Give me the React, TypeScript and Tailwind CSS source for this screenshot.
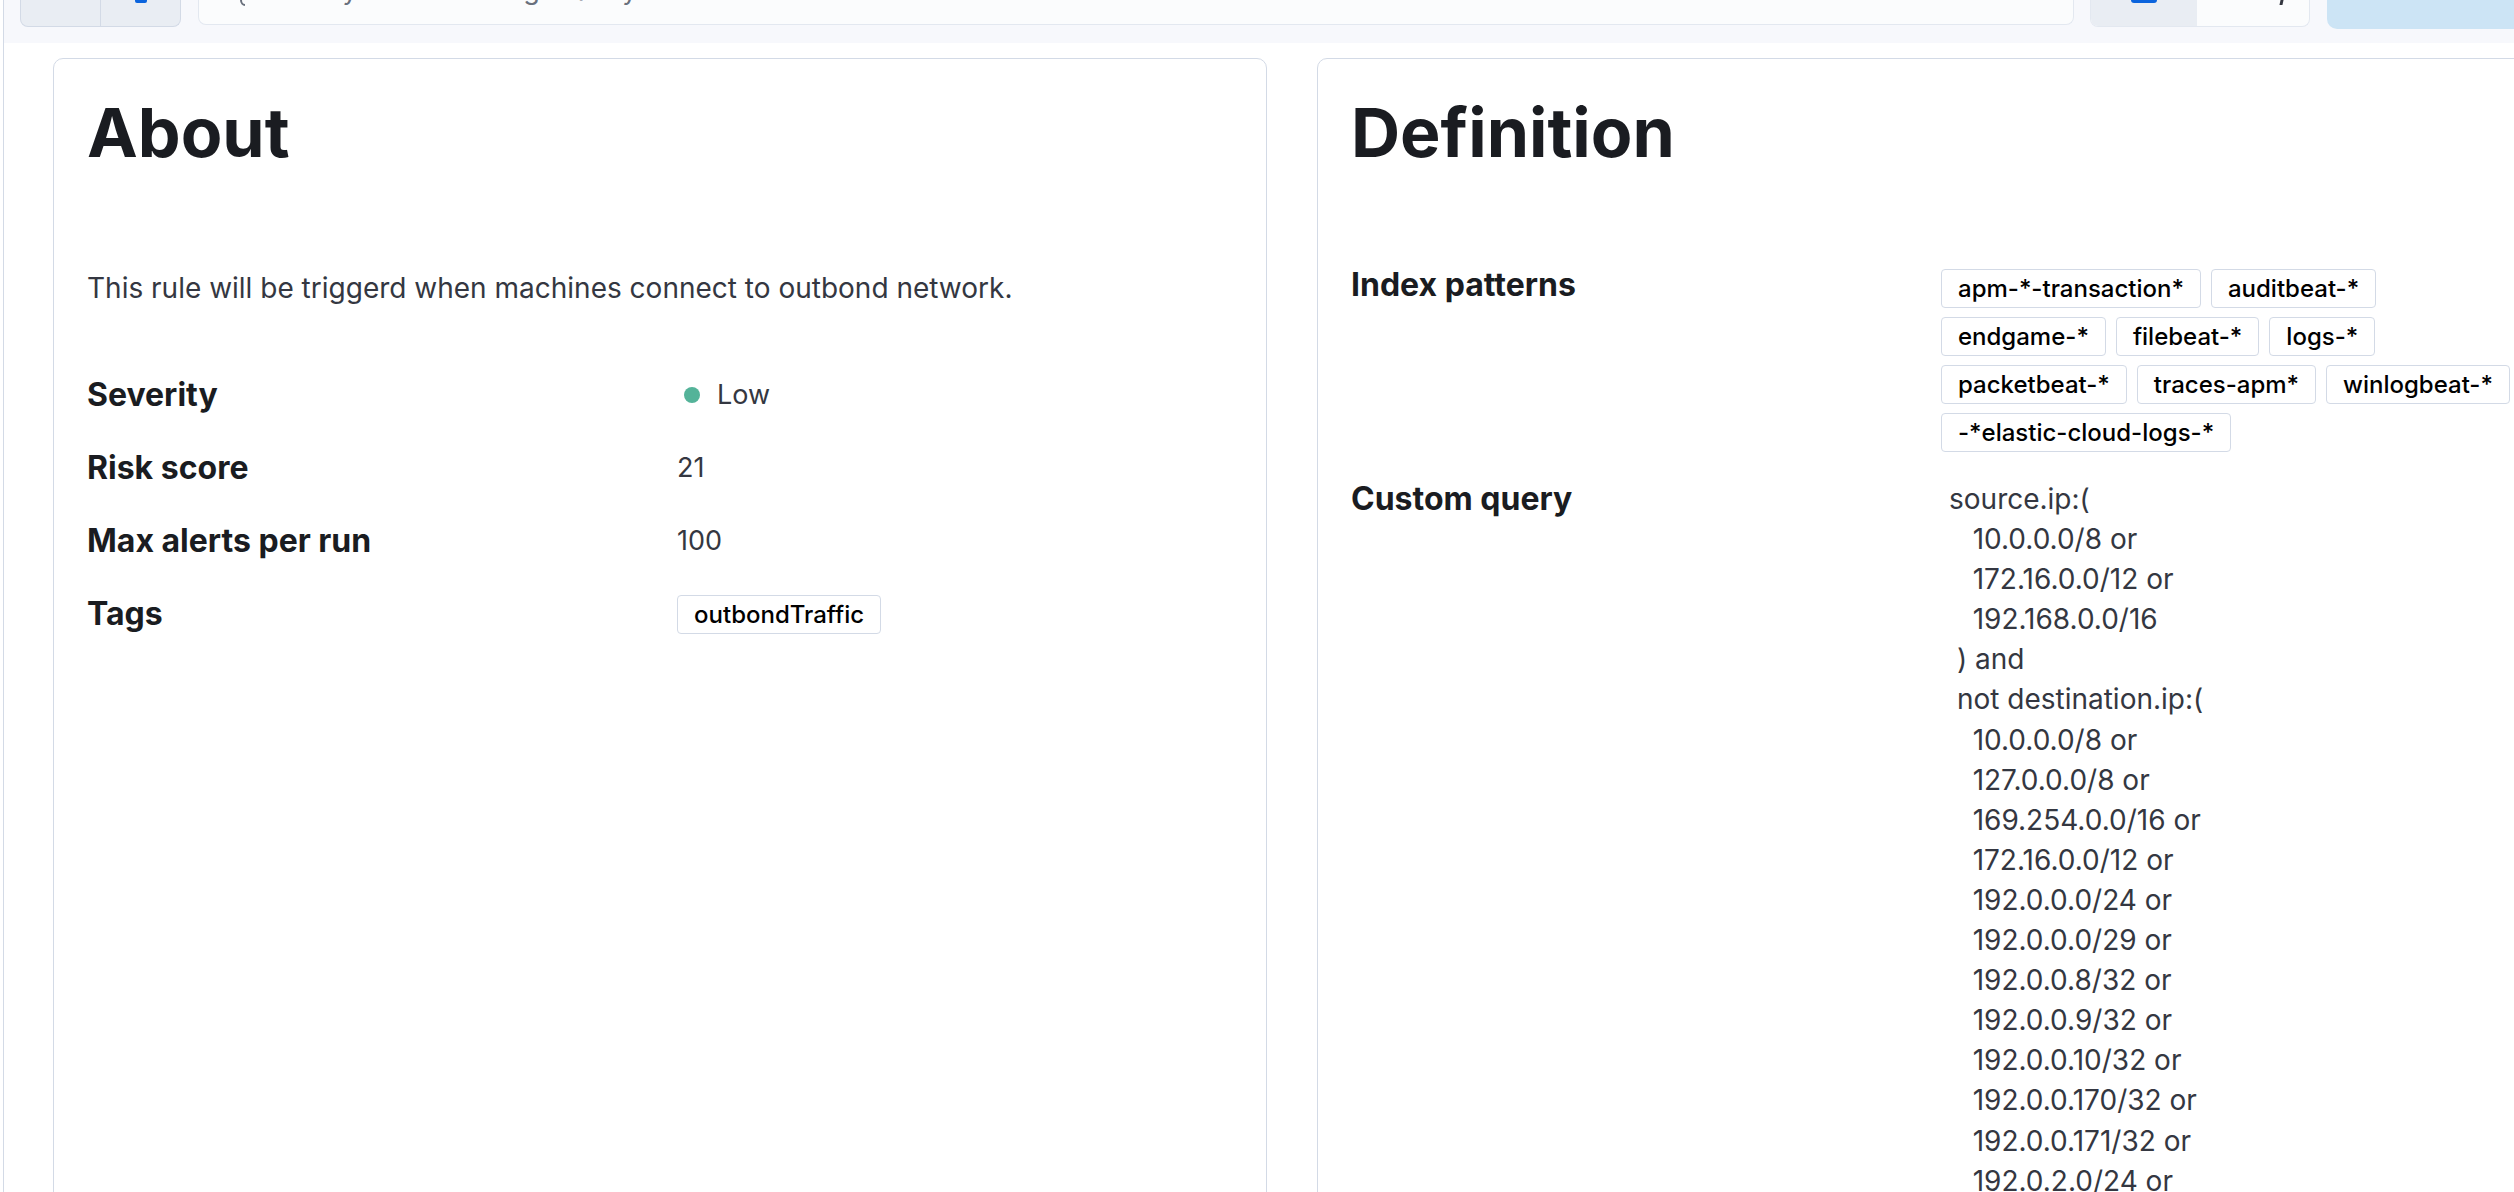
const indexRows = [
  ['apm-*-transaction*', 'auditbeat-*'],
  ['endgame-*', 'filebeat-*', 'logs-*'],
  ['packetbeat-*', 'traces-apm*', 'winlogbeat-*'],
  ['-*elastic-cloud-logs-*'],
];

const query = `source.ip:(
   10.0.0.0/8 or
   172.16.0.0/12 or
   192.168.0.0/16
 ) and
 not destination.ip:(
   10.0.0.0/8 or
   127.0.0.0/8 or
   169.254.0.0/16 or
   172.16.0.0/12 or
   192.0.0.0/24 or
   192.0.0.0/29 or
   192.0.0.8/32 or
   192.0.0.9/32 or
   192.0.0.10/32 or
   192.0.0.170/32 or
   192.0.0.171/32 or
   192.0.2.0/24 or
   192.31.196.0/24 or
   192.52.193.0/24 or
   192.168.0.0/16 or
   192.88.99.0/24 or
   224.0.0.0/4 or
   100.64.0.0/10 or
   192.175.48.0/24 or
   198.18.0.0/15 or
   198.51.100.0/24 or
   203.0.113.0/24 or
   240.0.0.0/4 or
   "::1" or
   "FE80::/10" or
   "FF00::/8"
 )`;

function Badge({ children }: { children: React.ReactNode }) {
  return (
    <span className="inline-flex h-[39px] items-center rounded-[4px] border border-[#d3dae6] bg-white px-[16px] text-[24px] font-medium text-[#000000]">
      {children}
    </span>
  );
}

function TopBar() {
  return (
    <div className="flex h-[43px] items-start bg-[#f7f8fc]">
      {/* botones izquierda */}
      <div className="ml-[16px] flex h-[27px] w-[161px] shrink-0 overflow-hidden rounded-b-[8px] border border-t-0 border-[#d3dae6] bg-[#e9edf3]">
        <div className="w-[80px] border-r border-[#d3dae6]" />
        <div className="flex flex-1 justify-center">
          <div className="h-[3px] w-[12px] rounded-b-[2px] bg-[#0b64dd]" />
        </div>
      </div>

      {/* barra de búsqueda */}
      <div className="ml-[17px] flex h-[25px] w-[1876px] shrink-0 overflow-hidden rounded-b-[8px] border border-t-0 border-[#e3e8f0] bg-[#fbfcfd]">
        <svg width="30" height="6" viewBox="0 0 30 6" className="ml-[38px] shrink-0">
          <path d="M4 0 C4 3 6 5 8 5" fill="none" stroke="#69707d" strokeWidth="2" />
        </svg>
        <span className="-mt-[24px] ml-[4px] whitespace-nowrap text-[27px] leading-none text-[#69707d]">
          Filter your data using KQL syntax
        </span>
      </div>

      {/* fecha */}
      <div className="ml-[16px] flex h-[27px] w-[220px] shrink-0 overflow-hidden rounded-b-[8px] border border-t-0 border-[#e3e8f0] bg-[#fbfcfd]">
        <div className="flex w-[106px] justify-center bg-[#e9edf3]">
          <div className="h-[3px] w-[26px] rounded-b-[3px] bg-[#0b64dd]" />
        </div>
        <div className="flex flex-1 justify-end pr-[26px]">
          <div className="h-[5px] w-[3px] -skew-x-12 bg-[#343741]" />
        </div>
      </div>

      <div className="ml-[17px] h-[29px] w-[300px] shrink-0 rounded-bl-[10px] bg-[#cce4f5]" />
    </div>
  );
}

function Row({ label, children }: { label: string; children: React.ReactNode }) {
  return (
    <div className="flex h-[44px] items-center">
      <div className="w-[590px] text-[32px] font-bold leading-[36px] text-[#1a1c21]">{label}</div>
      <div className="text-[27px] leading-[40px] text-[#343741]">{children}</div>
    </div>
  );
}

export default function App() {
  return (
    <div className="h-[1192px] w-[2514px] overflow-hidden bg-white font-['Inter','Noto_Sans',sans-serif]">
      <div className="ml-[3px] h-full border-l border-[#d3dae6]">
        <TopBar />

        <div className="mt-[15px] flex gap-[50px] pl-[49px]">
          {/* About */}
          <section className="h-[1400px] w-[1214px] shrink-0 rounded-[10px] border border-[#d3dae6] bg-white px-[33px] pt-[39px]">
            <h2 className="text-[68px] font-bold leading-none text-[#1a1c21]">About</h2>
            <p className="mt-[102px] text-[28px] leading-[40px] text-[#343741]">
              This rule will be triggerd when machines connect to outbond network.
            </p>
            <div className="mt-[65px] flex flex-col gap-[29px]">
              <Row label="Severity">
                <span className="flex items-center gap-[17px] pl-[7px]">
                  <span className="h-[16px] w-[16px] rounded-full bg-[#54b399]" />
                  Low
                </span>
              </Row>
              <Row label="Risk score">21</Row>
              <Row label="Max alerts per run">100</Row>
              <Row label="Tags">
                <Badge>outbondTraffic</Badge>
              </Row>
            </div>
          </section>

          {/* Definition */}
          <section className="h-[1400px] w-[1214px] shrink-0 rounded-[10px] border border-[#d3dae6] bg-white pl-[33px] pt-[39px]">
            <h2 className="text-[68px] font-bold leading-none text-[#1a1c21]">Definition</h2>
            <div className="mt-[103px] flex items-start">
              <div className="-mt-[2px] w-[590px] shrink-0 text-[32px] font-bold leading-[36px] text-[#1a1c21]">
                Index patterns
              </div>
              <div className="flex flex-col gap-[9px]">
                {indexRows.map((row, i) => (
                  <div key={i} className="flex gap-[10px]">
                    {row.map((p) => (
                      <Badge key={p}>{p}</Badge>
                    ))}
                  </div>
                ))}
              </div>
            </div>
            <div className="mt-[27px] flex items-start">
              <div className="mt-[2px] w-[590px] shrink-0 text-[32px] font-bold leading-[36px] text-[#1a1c21]">
                Custom query
              </div>
              <div className="pl-[8px] text-[28px] leading-[40.1px] whitespace-pre text-[#343741]">{query}</div>
            </div>
          </section>
        </div>
      </div>
    </div>
  );
}
